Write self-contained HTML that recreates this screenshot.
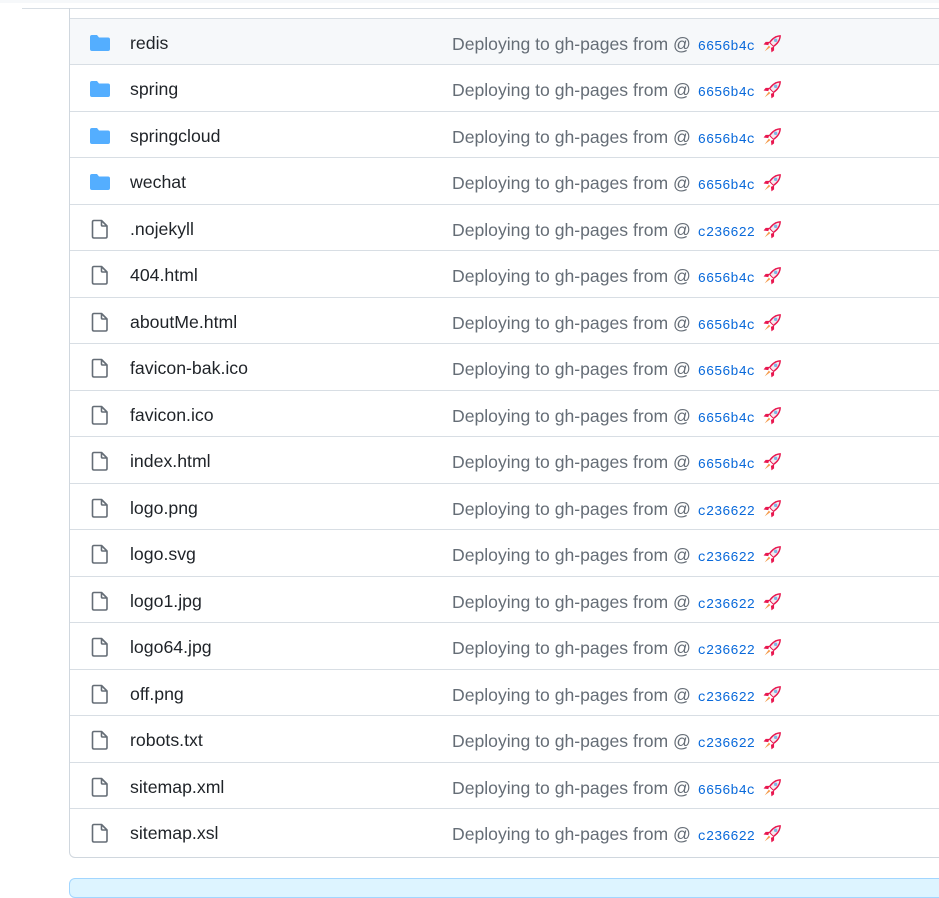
<!DOCTYPE html>
<html><head><meta charset="utf-8"><style>
*{margin:0;padding:0;box-sizing:border-box}
body{width:939px;height:883px;overflow:hidden;background:#fff;font-family:"Liberation Sans","DejaVu Sans",sans-serif;position:relative}
.top{position:absolute;left:0;top:0;width:939px;height:3px;background:#f6f8fa}
.tl{position:absolute;left:22px;top:8px;width:940px;height:1px;background:#d8dee4}
.box{position:absolute;left:69px;top:8px;width:900px;height:850px;border:1px solid #d0d7de;border-top:none;border-radius:0 0 6px 6px}
.row{position:absolute;left:70px;width:880px;height:47px;border-top:1px solid #d8dee4}
.row.h{background:#f6f8fa}
.ic{position:absolute;left:19px;top:14px}
.nm{position:absolute;left:60px;top:14px;font-size:17.7px;color:#1f2328}
.msg{position:absolute;left:382px;top:14px;font-size:17.6px;color:#656d76;white-space:nowrap}
.hs{font-family:"Liberation Mono",monospace;font-size:13.6px;color:#0969da;margin-left:2px}
.blue{position:absolute;left:69px;top:878px;width:900px;height:20px;background:#ddf4ff;border:1px solid #a2d6ff;border-radius:6px}
</style></head><body>
<div class="top"></div><div class="tl"></div>
<div class="box"></div>
<div id="rows"></div>
<div class="blue"></div>
<script>
var items=[["redis",1,"6656b4c"],["spring",1,"6656b4c"],["springcloud",1,"6656b4c"],["wechat",1,"6656b4c"],[".nojekyll",0,"c236622"],["404.html",0,"6656b4c"],["aboutMe.html",0,"6656b4c"],["favicon-bak.ico",0,"6656b4c"],["favicon.ico",0,"6656b4c"],["index.html",0,"6656b4c"],["logo.png",0,"c236622"],["logo.svg",0,"c236622"],["logo1.jpg",0,"c236622"],["logo64.jpg",0,"c236622"],["off.png",0,"c236622"],["robots.txt",0,"c236622"],["sitemap.xml",0,"6656b4c"],["sitemap.xsl",0,"c236622"]];
var folder='<svg class="ic" width="22" height="20" viewBox="0 0 22 20"><path d="M1 4 Q1 2 3 2 H8 L10 4.5 H19 Q21 4.5 21 6.5 V16 Q21 18 19 18 H3 Q1 18 1 16 Z" fill="#54aeff"/></svg>';
var file='<svg class="ic" width="22" height="22" viewBox="0 0 22 22" style="top:13px"><path d="M5 2.5 H12.5 L18 8 V18.5 Q18 20 16.5 20 H5 Q3.5 20 3.5 18.5 V4 Q3.5 2.5 5 2.5 Z M12.5 2.5 V7 Q12.5 8 13.5 8 H18" fill="none" stroke="#656d76" stroke-width="1.6" stroke-linejoin="round"/></svg>';
var rocket='<svg width="21" height="21" viewBox="0 0 20 20" style="vertical-align:-4px;margin-left:7px"><path d="M18 2 Q11 2 6.5 9 L11 13.5 Q18 9 18 2Z" fill="#e8174f"/><path d="M16.6 3.4 Q12 3.8 8 9.2 L10.8 12 Q16.2 8 16.6 3.4Z" fill="#f3e8ee"/><circle cx="13" cy="7" r="1.6" fill="#7fb6e6"/><path d="M7 8.5 L3.5 8.5 L1.5 11 L6 11.5Z M11.5 13 L11.5 16.5 L9 18.5 L8.5 14Z" fill="#e8174f"/><path d="M6.5 12 L2.5 17.5 L8 13.5Z" fill="#f59a4a"/></svg>';
var h='';
items.forEach(function(it,i){var top=18+i*46.47;
h+='<div class="row'+(i==0?' h':'')+'" style="top:'+top+'px">'+(it[1]?folder:file)+'<div class="nm">'+it[0]+'</div><div class="msg">Deploying to gh-pages from @ <span class="hs">'+it[2]+'</span>'+rocket+'</div></div>';});
document.getElementById('rows').innerHTML=h;
</script>
</body></html>
